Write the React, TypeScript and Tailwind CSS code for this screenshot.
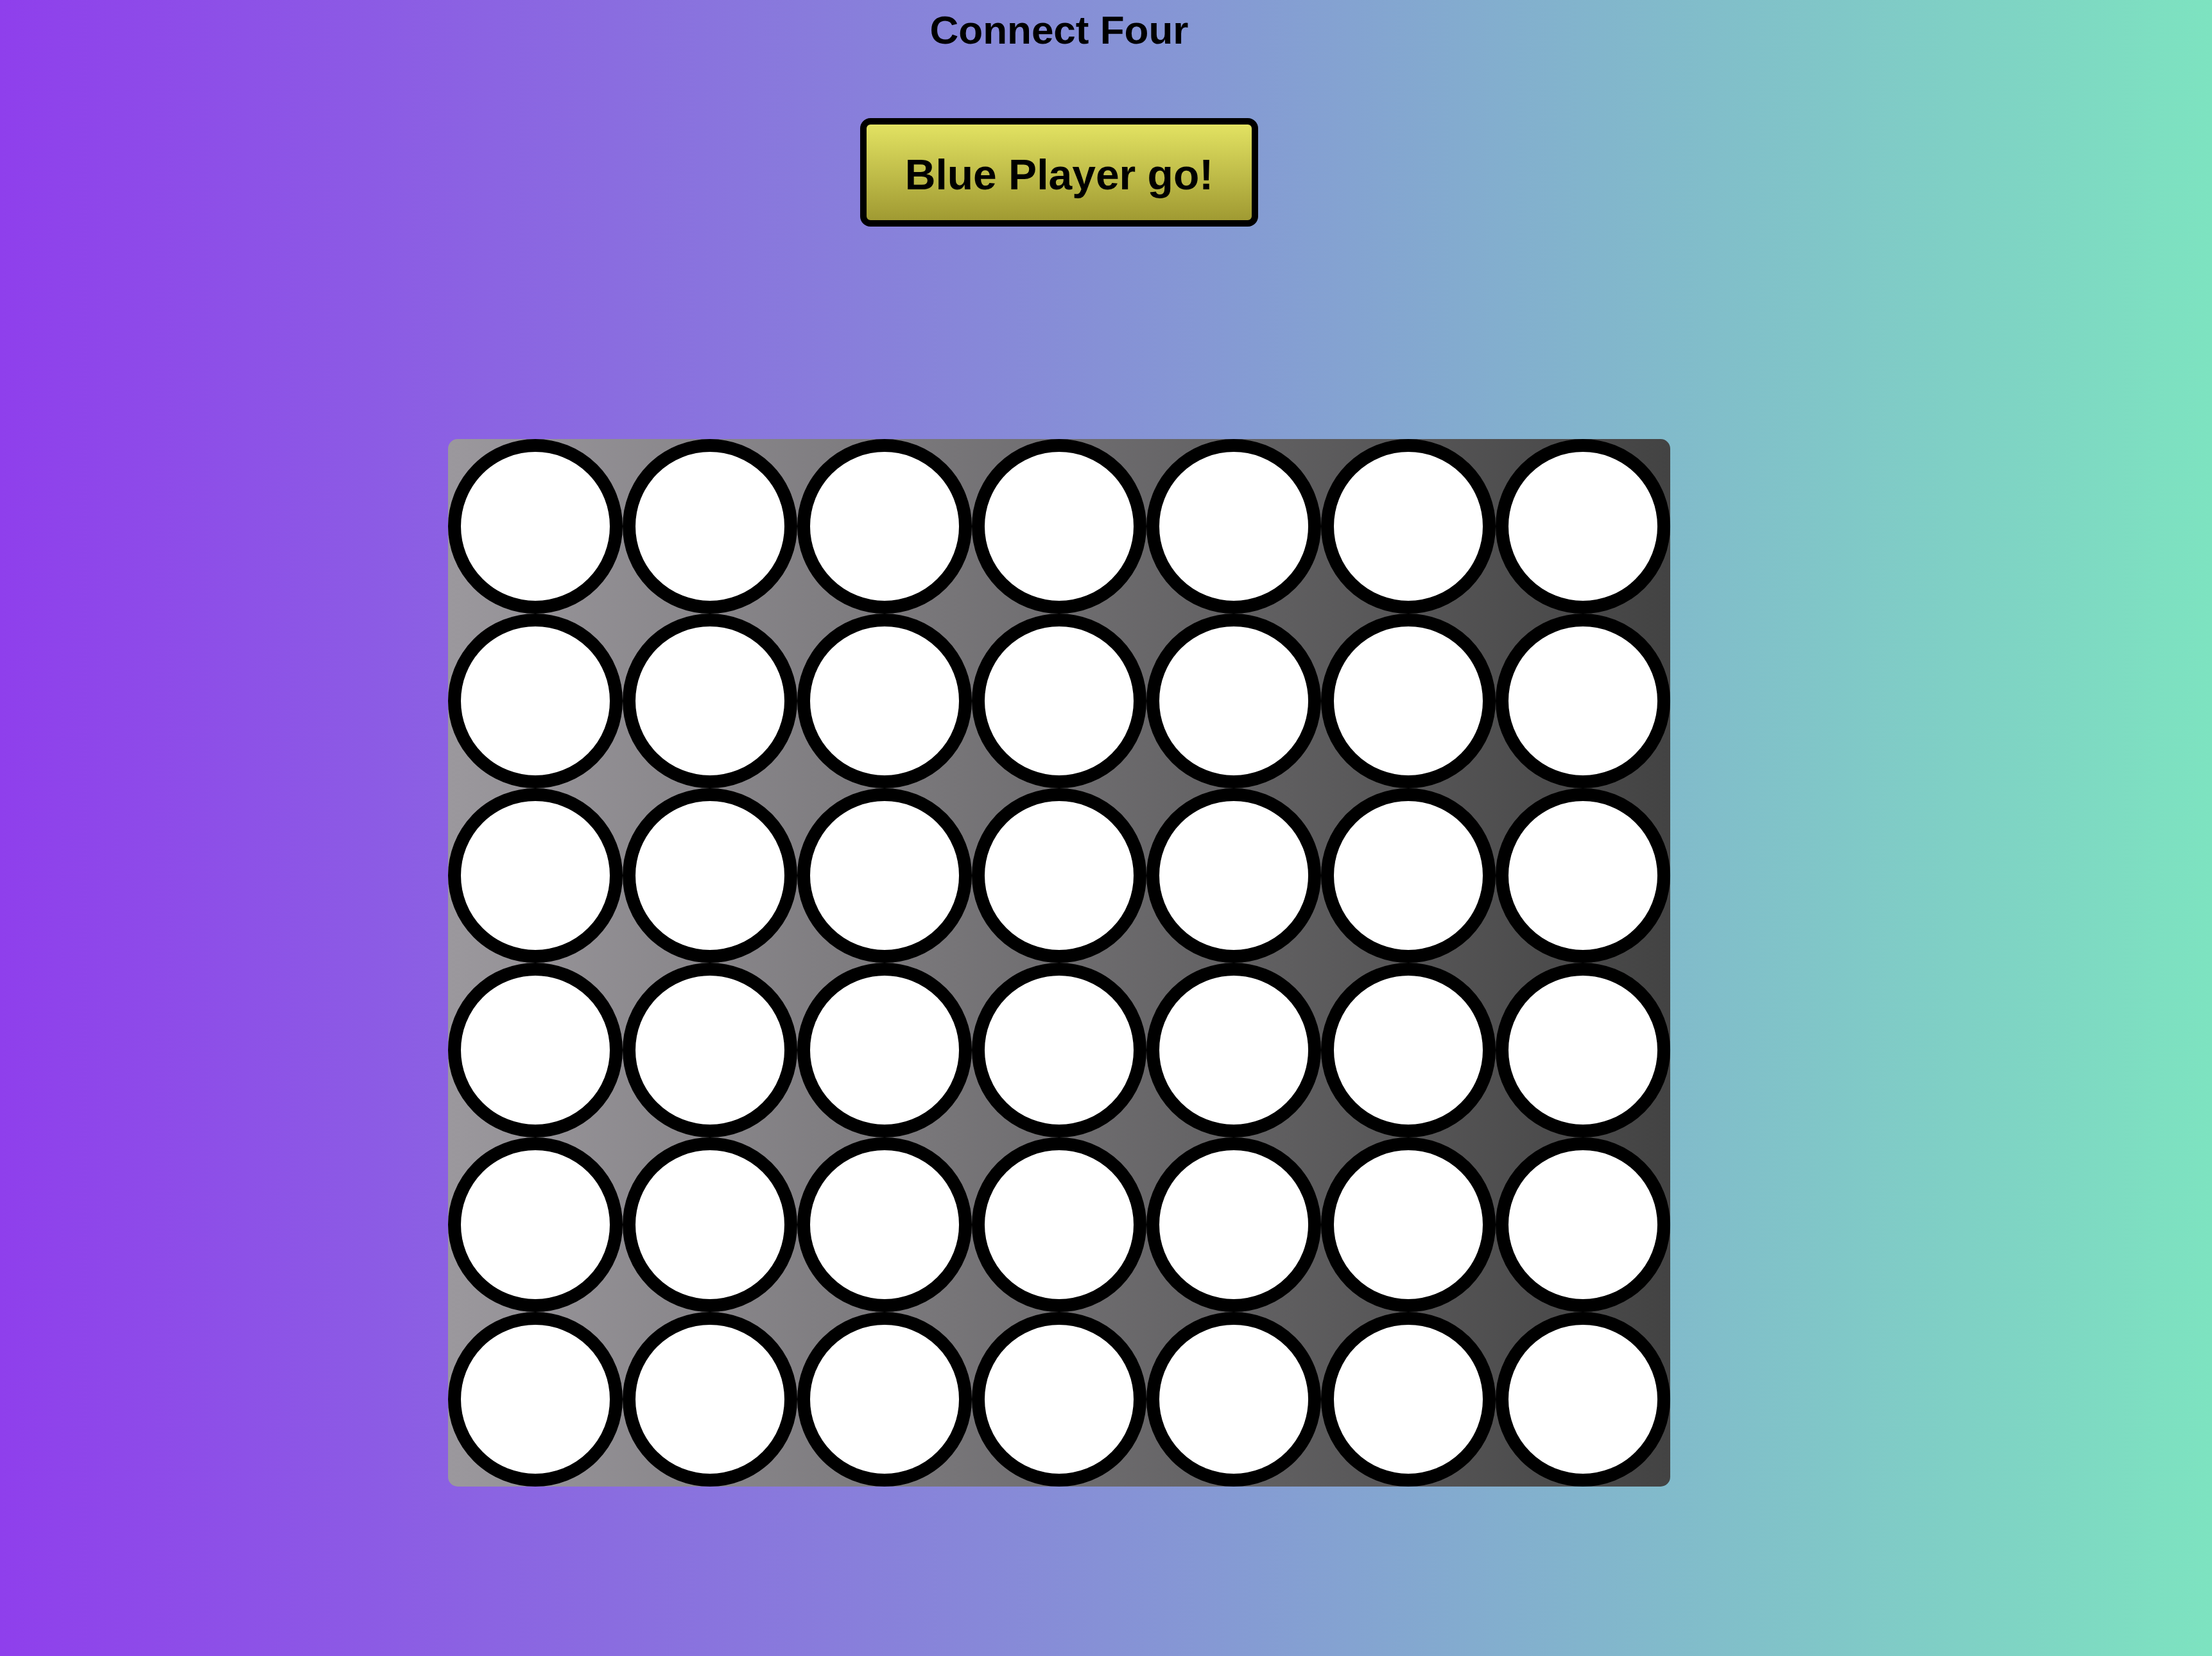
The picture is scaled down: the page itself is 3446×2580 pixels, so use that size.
const ROWS = 6
const COLS = 7

const App = () => {
  const cells = Array.from({ length: ROWS * COLS }, (_, i) => i)

  return (
    <div className="min-h-screen w-full bg-[linear-gradient(to_right,#8f3fec,#7de3c0)] font-['Liberation_Sans',Arial,sans-serif] text-black">
      <div className="w-[3300px] flex flex-col items-center">
        {/* Title */}
        <h1 className="pt-[12px] text-[62px] leading-[70px] font-bold">Connect Four</h1>

        {/* Turn indicator */}
        <button className="mt-[102px] w-[620px] h-[169px] flex items-center justify-center pt-[7px] border-[10px] border-black rounded-[16px] bg-[linear-gradient(to_bottom,#e2e262,#a09a32)] text-[66px] leading-none font-bold">
          Blue Player go!
        </button>

        {/* Board */}
        <div className="mt-[331px] w-[1904px] h-[1632px] grid grid-cols-7 rounded-[15px] bg-[linear-gradient(to_right,#9b989d,#434343)]">
          {cells.map((i) => (
            <div key={i} className="w-[272px] h-[272px] rounded-full border-[20px] border-black bg-white" />
          ))}
        </div>
      </div>
    </div>
  )
}

export default App
